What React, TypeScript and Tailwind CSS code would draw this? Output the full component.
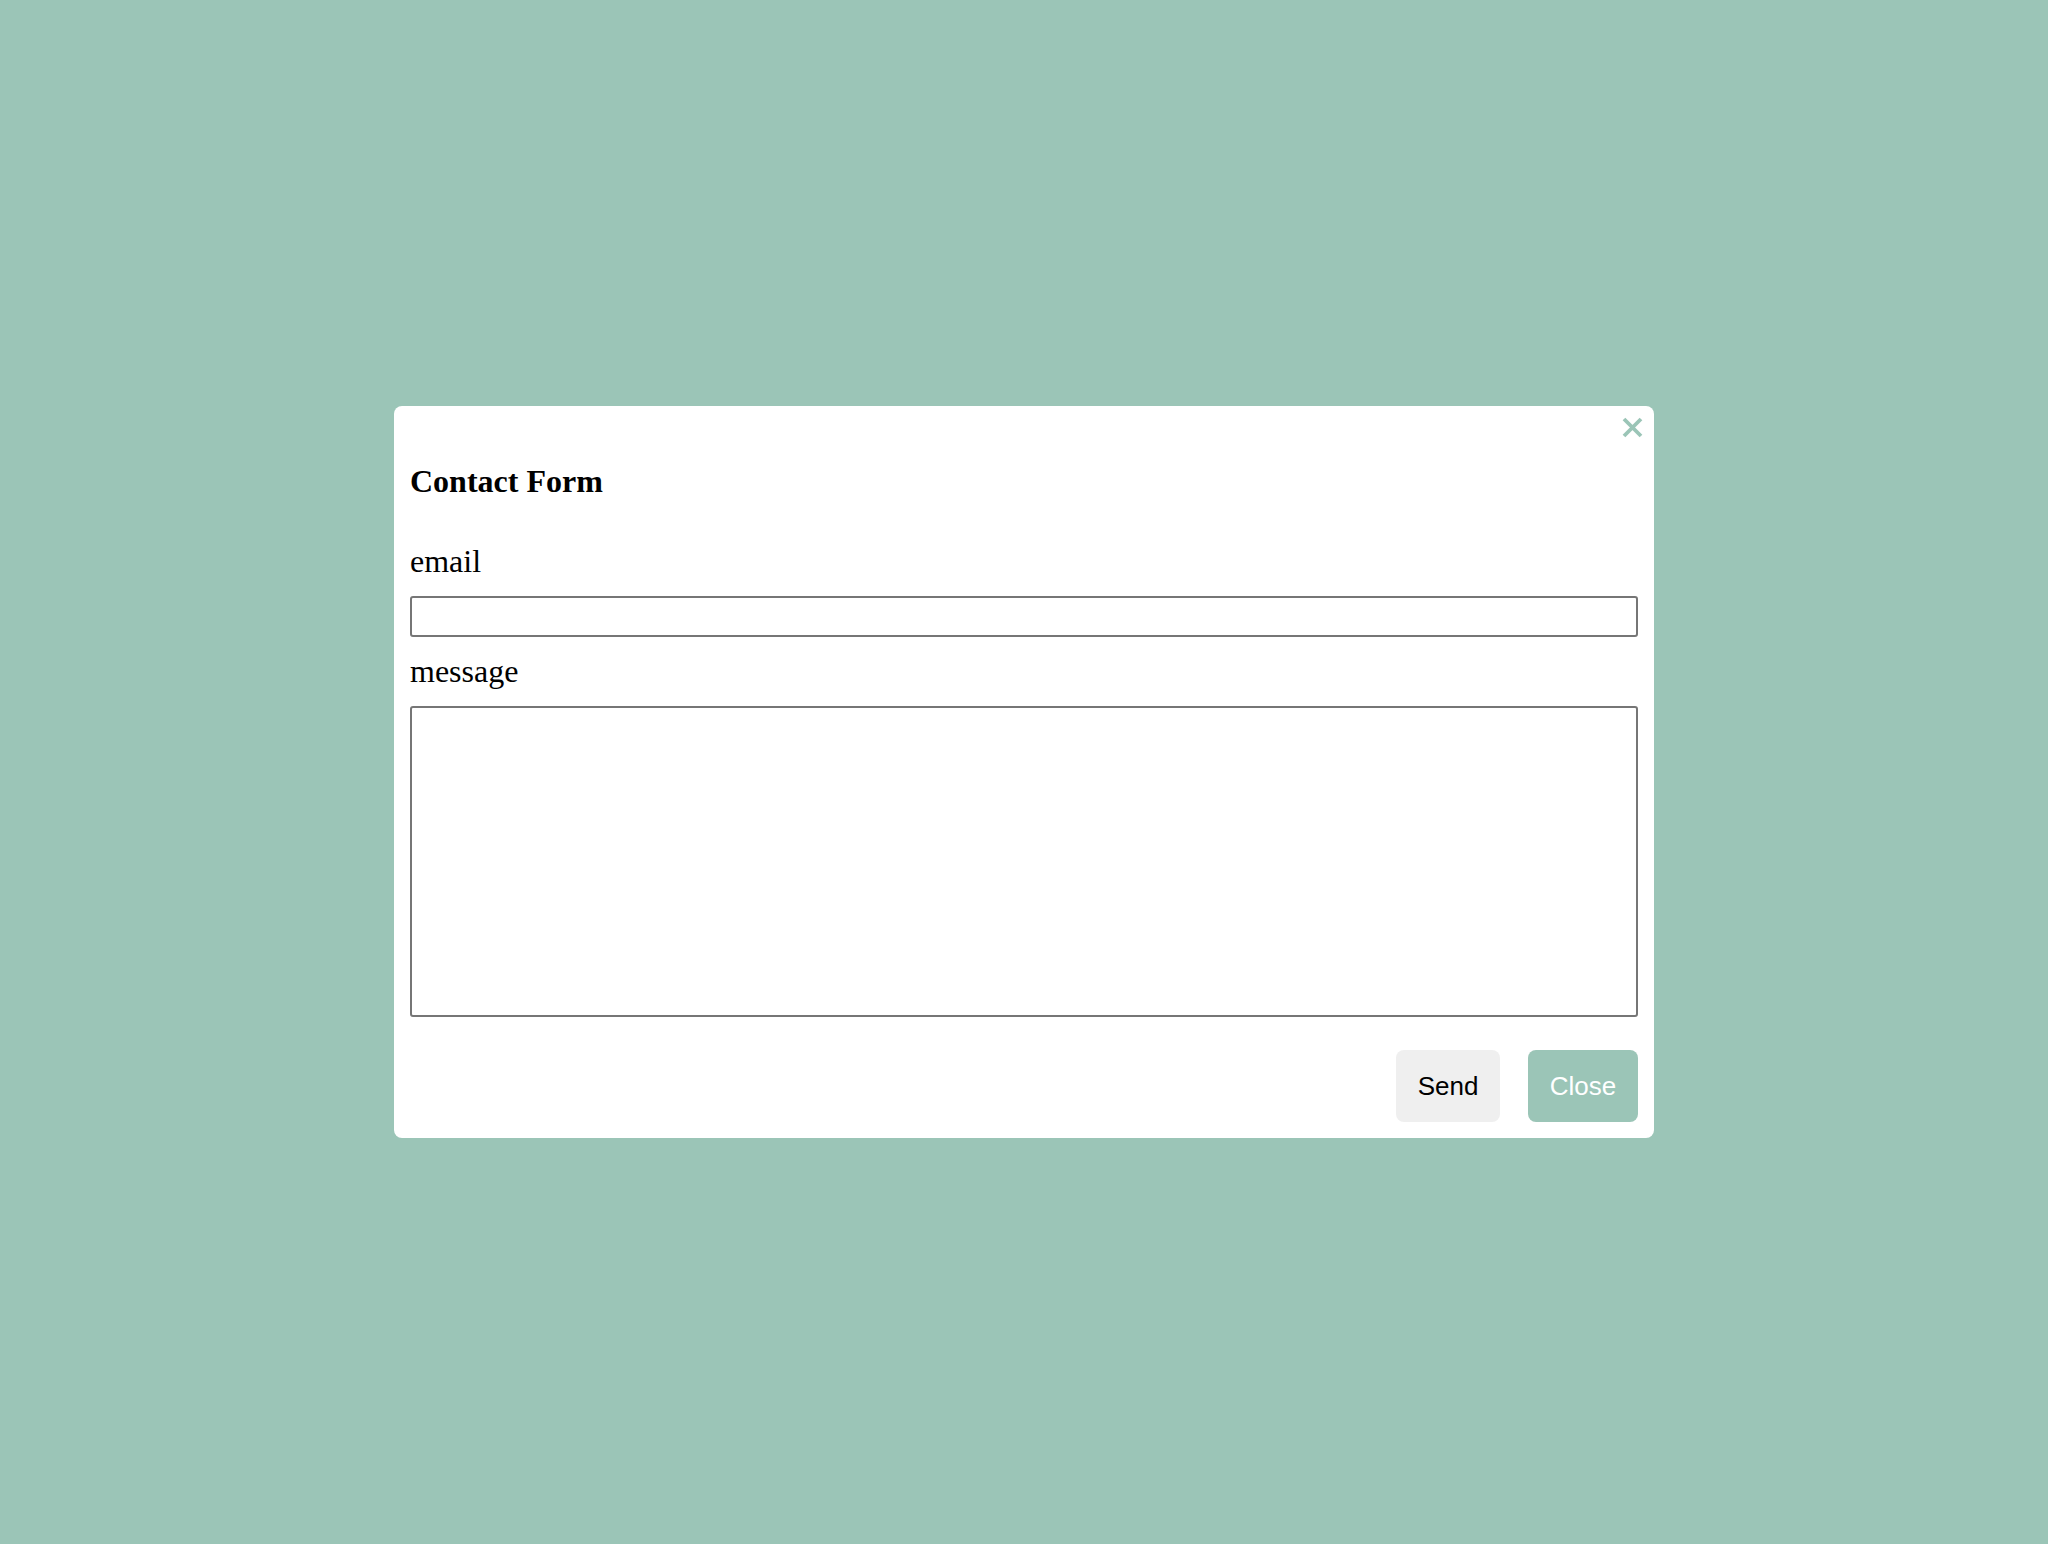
import React, { useState } from "react";

const CloseIcon = () => (
  <svg width="21" height="21" viewBox="0 0 21 21" fill="none">
    <path
      d="M2 2 L19 19 M19 2 L2 19"
      stroke="#9bc5b7"
      strokeWidth="3.8"
      strokeLinecap="butt"
    />
  </svg>
);

const ContactModal = () => {
  const [email, setEmail] = useState("");
  const [message, setMessage] = useState("");

  return (
    <div className="relative flex w-[1260px] flex-col rounded-lg bg-white p-4 font-['Liberation_Serif',serif] text-black">
      <button className="absolute right-[11px] top-[11px] flex h-[21px] w-[21px] items-center justify-center">
        <CloseIcon />
      </button>
      <h3 className="mt-[41px] text-[32px] font-bold leading-[36px]">Contact Form</h3>
      <label className="mt-[44px] text-[32px] leading-[36px]">email</label>
      <input
        type="email"
        value={email}
        onChange={(e) => setEmail(e.target.value)}
        className="mt-[17px] h-[41px] w-full rounded-[3px] border-2 border-[#767676] bg-white px-2 outline-none"
      />
      <label className="mt-4 text-[32px] leading-[36px]">message</label>
      <textarea
        value={message}
        onChange={(e) => setMessage(e.target.value)}
        className="mt-[17px] h-[311px] w-full resize-none rounded-[3px] border-2 border-[#767676] bg-white p-2 outline-none"
      />
      <div className="mt-[33px] flex justify-end gap-[28px] font-['Liberation_Sans',Arial,sans-serif] text-[26px]">
        <button className="h-[72px] w-[104px] rounded-lg bg-[#efefef] text-black">Send</button>
        <button className="h-[72px] w-[110px] rounded-lg bg-[#9bc5b7] text-white">Close</button>
      </div>
    </div>
  );
};

export default function App() {
  return (
    <div className="flex h-screen w-full items-center justify-center bg-[#9bc5b7]">
      <ContactModal />
    </div>
  );
}
